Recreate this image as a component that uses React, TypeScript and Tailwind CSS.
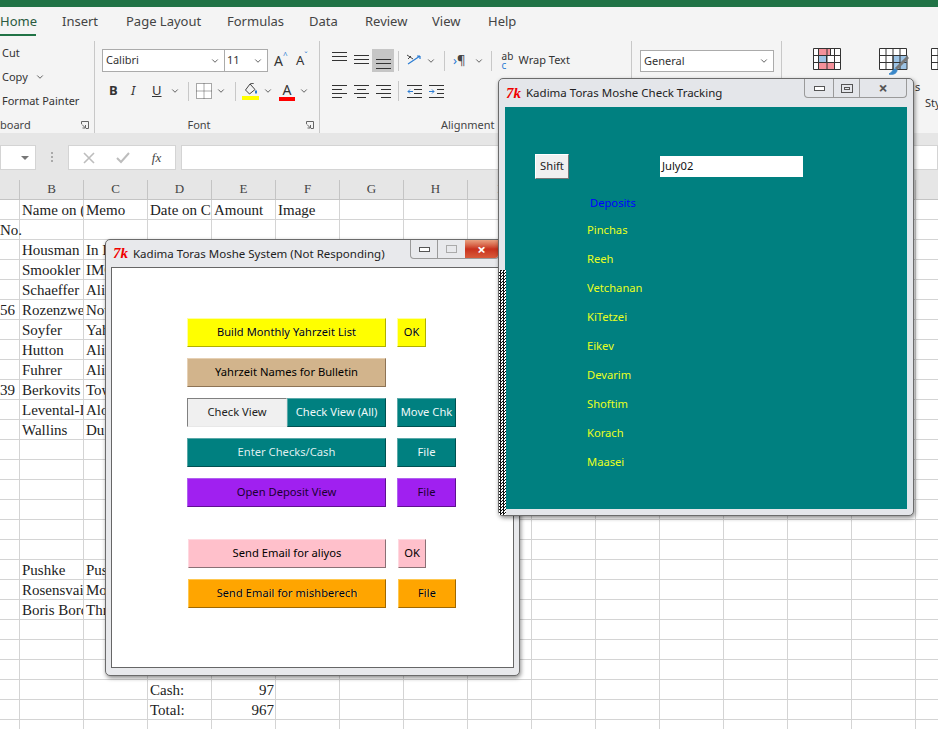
import type { ReactNode } from "react";
import { ChevronDown } from "lucide-react";

const TABS = [
  { label: "Home", width: "w-[62px]" },
  { label: "Insert", width: "w-[64px]" },
  { label: "Page Layout", width: "w-[101px]" },
  { label: "Formulas", width: "w-[82px]" },
  { label: "Data", width: "w-[56px]" },
  { label: "Review", width: "w-[67px]" },
  { label: "View", width: "w-[56px]" },
  { label: "Help", width: "w-[50px]" },
];

const COLUMNS = ["B", "C", "D", "E", "F", "G", "H", "I", "J", "K", "L", "M", "N", "O", "P"];

// row index -> cell text by column, A is index 0
const CELLS: Record<number, (string | null)[]> = {
  0: [null, "Name on (", "Memo", "Date on Cl", "Amount", "Image"],
  1: ["No."],
  2: [null, "Housman", "In I"],
  3: [null, "Smookler", "IMC"],
  4: [null, "Schaeffer", "Aliy"],
  5: ["56", "Rozenzwe", "Nov"],
  6: [null, "Soyfer", "Yah"],
  7: [null, "Hutton", "Aliy"],
  8: [null, "Fuhrer", "Aliy"],
  9: ["39", "Berkovits", "Tow"],
  10: [null, "Levental-I", "Alo"],
  11: [null, "Wallins", "Du"],
  18: [null, "Pushke", "Pus"],
  19: [null, "Rosensvai", "Mo"],
  20: [null, "Boris Bord", "Thr"],
  24: [null, null, null, "Cash:", "97"],
  25: [null, null, null, "Total:", "967"],
};

const PARSHIOS = ["Pinchas", "Reeh", "Vetchanan", "KiTetzei", "Eikev", "Devarim", "Shoftim", "Korach", "Maasei"];

function Chevron({ className = "" }: { className?: string }) {
  return <ChevronDown size={10} strokeWidth={2} className={`shrink-0 text-[#444] ${className}`} />;
}

function Lines({ rows, highlight }: { rows: number[]; highlight?: boolean }) {
  return (
    <div className={`flex h-[23px] w-[22px] shrink-0 items-center justify-center ${highlight ? "bg-[#c6c6c6]" : ""}`}>
      <svg width="15" height="19" viewBox="0 0 15 19" stroke="#333" strokeWidth="1">
        {rows.map((y) => (
          <line key={y} x1={0} x2={15} y1={y + 0.5} y2={y + 0.5} />
        ))}
      </svg>
    </div>
  );
}

function AlignH({ side }: { side: "l" | "c" | "r" }) {
  const long = [0, 15];
  const short = side === "l" ? [0, 10] : side === "c" ? [3, 12] : [5, 15];
  return (
    <div className="flex h-[18px] w-[22px] shrink-0 items-center justify-center">
      <svg width="15" height="14" viewBox="0 0 15 14" stroke="#333">
        {[0, 1, 2, 3].map((i) => {
          const seg = i % 2 === 0 ? long : short;
          return <line key={i} x1={seg[0]} x2={seg[1]} y1={1.5 + i * 4} y2={1.5 + i * 4} />;
        })}
      </svg>
    </div>
  );
}

function Sep({ className = "" }: { className?: string }) {
  return <div className={`w-px shrink-0 bg-[#c8c8c8] ${className}`} />;
}

function Launcher() {
  return (
    <svg width="8" height="8" viewBox="0 0 8 8" fill="none" stroke="#666" className="absolute right-[5px] bottom-[4px]">
      <path d="M0.5 3V0.5H7.5V7.5H5M1 3.5L4.5 7M4.5 4V7H1.5" />
    </svg>
  );
}

function GroupLabel({ children }: { children: ReactNode }) {
  return <div className="absolute inset-x-0 bottom-0 h-4 pr-[16px] text-center text-[11px] leading-4 text-[#444]">{children}</div>;
}

function Ribbon() {
  return (
    <div className="flex h-[98px] bg-[#f4f4f4] font-['Noto_Sans',sans-serif] text-[11px] text-[#333]">
      {/* clipboard */}
      <div className="relative mt-[6px] h-[92px] w-[95px] shrink-0 border-r border-[#c8c8c8] pl-[2px] leading-[24px]">
        <div>Cut</div>
        <div className="flex items-center gap-[7px]">
          Copy <Chevron />
        </div>
        <div>Format Painter</div>
        <div className="absolute bottom-0 left-0 h-4 leading-4 text-[#444]">board</div>
        <Launcher />
      </div>

      {/* font */}
      <div className="relative mt-[6px] h-[92px] w-[225px] shrink-0 border-r border-[#c8c8c8] pl-[7px] pt-[8px]">
        <div className="flex items-center">
          <div className="flex h-[23px] w-[123px] shrink-0 items-center justify-between border border-[#ababab] bg-white pl-[3px] pr-[4px]">
            Calibri <Chevron />
          </div>
          <div className="ml-[-1px] flex h-[23px] w-[44px] shrink-0 items-center justify-between border border-[#ababab] bg-white pl-[2px] pr-[4px]">
            11 <Chevron />
          </div>
          <div className="ml-[6px] flex w-[20px] text-[14px]">
            A<span className="text-[8px] leading-[10px] text-[#2b7cd3]">^</span>
          </div>
          <div className="ml-[2px] flex w-[20px] text-[13px]">
            A<span className="text-[8px] leading-[10px] text-[#2b7cd3]">ˇ</span>
          </div>
        </div>
        <div className="mt-[8px] flex h-[22px] items-center text-[13px]">
          <span className="ml-[7px] w-[22px] font-bold">B</span>
          <span className="w-[21px] italic">I</span>
          <span className="w-[11px] underline">U</span>
          <Chevron className="ml-[7px]" />
          <Sep className="ml-[8px] h-[19px]" />
          <svg width="16" height="16" viewBox="0 0 16 16" className="ml-[7px]" fill="#fff" stroke="#555" strokeDasharray="1 1">
            <path d="M.5.5h15v15H.5zM8 .5v15M.5 8h15" />
          </svg>
          <Chevron className="ml-[4px]" />
          <Sep className="ml-[9px] h-[19px]" />
          <div className="ml-[6px] flex w-[17px] flex-col items-center">
            <svg width="14" height="13" viewBox="0 0 14 13" fill="none" stroke="#444">
              <path d="M6 1L1.5 7l4 4L11 6.5zM6 1l4-1" />
              <path d="M12 7.5v3" stroke="#2b7cd3" strokeWidth="2" />
            </svg>
            <div className="h-1 w-full bg-[#ffff00]" />
          </div>
          <Chevron className="ml-[4px]" />
          <div className="ml-[6px] flex w-[16px] flex-col items-center text-[14px] leading-[15px]">
            A
            <div className="h-1 w-full bg-[#ff0000]" />
          </div>
          <Chevron className="ml-[4px]" />
        </div>
        <GroupLabel>Font</GroupLabel>
        <Launcher />
      </div>

      {/* alignment */}
      <div className="relative mt-[6px] h-[92px] w-[312px] shrink-0 border-r border-[#c8c8c8] pl-[8px] pt-[8px]">
        <div className="flex h-[23px] items-center">
          <Lines rows={[1, 5, 9]} />
          <Lines rows={[4, 8, 12]} />
          <Lines rows={[8, 12, 17]} highlight />
          <Sep className="ml-[4px] h-[20px]" />
          <svg width="18" height="18" viewBox="0 0 18 18" fill="none" className="ml-[6px] shrink-0">
            <path d="M3 12L15 4M15 4h-3M15 4v3" stroke="#2b7cd3" strokeWidth="1.2" />
            <path d="M2 3l6 4M3 7l3-3" stroke="#444" />
          </svg>
          <Chevron className="ml-[3px]" />
          <Sep className="ml-[8px] h-[20px]" />
          <span className="ml-[8px] text-[13px] text-[#2b7cd3]">›</span>
          <span className="text-[13px] text-[#444]">¶</span>
          <Chevron className="ml-[8px]" />
          <Sep className="ml-[7px] h-[20px]" />
          <div className="ml-[10px] flex items-center gap-[3px]">
            <span className="w-[14px] break-all text-[10px] leading-[9px]">
              ab<span className="text-[#2b7cd3]">c</span>
            </span>
            <span className="whitespace-nowrap">Wrap Text</span>
          </div>
        </div>
        <div className="mt-[8px] flex h-[22px] items-center">
          <AlignH side="l" />
          <AlignH side="c" />
          <AlignH side="r" />
          <Sep className="ml-[4px] h-[20px]" />
          <svg width="15" height="14" viewBox="0 0 15 14" fill="none" stroke="#333" className="ml-[8px]">
            <path d="M0 1.5h15M7 5.5h8M7 9.5h8M0 13.5h15" />
            <path d="M6 7.5H1M3 5.5l-2 2 2 2" stroke="#2b7cd3" />
          </svg>
          <svg width="15" height="14" viewBox="0 0 15 14" fill="none" stroke="#333" className="ml-[7px]">
            <path d="M0 1.5h15M8 5.5h7M8 9.5h7M0 13.5h15" />
            <path d="M0 7.5h5M3 5.5l2 2-2 2" stroke="#2b7cd3" />
          </svg>
        </div>
        <div className="absolute inset-x-0 bottom-0 h-4 pl-[121px] leading-4 text-[#444]">Alignment</div>
      </div>

      {/* number */}
      <div className="mt-[6px] h-[92px] w-[150px] shrink-0 border-r border-[#c8c8c8] pl-[8px] pt-[9px]">
        <div className="flex h-[22px] w-[134px] items-center justify-between border border-[#ababab] bg-white pl-[3px] pr-[4px]">
          General <Chevron />
        </div>
      </div>

      {/* styles, cut off by the window edge */}
      <div className="relative flex pl-[31px] pt-[13px]">
        <svg width="28" height="22" viewBox="0 0 28 22" fill="#fff" stroke="#333" className="shrink-0">
          <path d="M.5.5h27v21H.5z" />
          <path d="M5.5.5h12v7h-12z" fill="#f4919a" />
          <path d="M5.5 7.5h8v7h-8z" fill="#9cc3e5" />
          <path d="M5.5 14.5h16v7h-16z" fill="#f4919a" />
          <path d="M5.5.5v21M14 .5v21M21.5.5v21M.5 7.5h27M.5 14.5h27" fill="none" />
        </svg>
        <svg width="30" height="28" viewBox="0 0 30 28" fill="#fff" stroke="#333" className="ml-[38px] shrink-0">
          <path d="M.5.5h27v21H.5z" />
          <path d="M14 7.5h14v14H14z" fill="#9cc3e5" />
          <path d="M14 .5v21M21 .5v21M7 .5v21M.5 7.5h27M.5 14.5h27" fill="none" />
          <path d="M29 9L17 21" stroke="#777" strokeWidth="3" />
          <path d="M16 21c-3 1-3 4-6 5 3 1 8 0 8-4z" fill="#3a87c8" stroke="#3a87c8" />
        </svg>
        <svg width="14" height="22" viewBox="0 0 14 22" fill="#fff" stroke="#333" className="ml-[22px] shrink-0">
          <path d="M.5.5h20v21H.5zM.5 7.5h20M.5 14.5h20M7 .5v21" />
        </svg>
        <span className="absolute left-[133px] top-[44px]">s</span>
        <span className="absolute left-[143px] top-[60px]">Sty</span>
      </div>
    </div>
  );
}

function FormulaBar() {
  return (
    <div className="flex h-[47px] items-start bg-[#e6e6e6] pt-[12px]">
      <div className="flex h-[25px] w-[36px] items-center justify-end border border-[#d4d4d4] bg-white pr-[6px]">
        <div className="h-0 w-0 border-x-[4px] border-t-[4px] border-x-transparent border-t-[#777]" />
      </div>
      <div className="flex w-[32px] flex-col items-center gap-[2px]">
        <div className="mt-[7px] size-[2px] bg-[#aaa]" />
        <div className="size-[2px] bg-[#aaa]" />
        <div className="size-[2px] bg-[#aaa]" />
      </div>
      <div className="flex h-[25px] w-[108px] items-center justify-around border border-[#d4d4d4] bg-white px-[3px] text-[#bbb]">
        <svg width="12" height="12" viewBox="0 0 12 12" stroke="#bdbdbd" strokeWidth="1.6">
          <path d="M1 1l10 10M11 1L1 11" />
        </svg>
        <svg width="14" height="12" viewBox="0 0 14 12" fill="none" stroke="#bdbdbd" strokeWidth="2">
          <path d="M1 6l4 4 8-9" />
        </svg>
        <span className="font-['Liberation_Serif',serif] text-[13px] italic text-[#444]">fx</span>
      </div>
      <div className="ml-[5px] h-[25px] flex-1 border border-[#d4d4d4] bg-white" />
    </div>
  );
}

function Sheet() {
  const rowNumbers = Array.from({ length: 27 }, (_, i) => i);
  return (
    <div className="font-['Liberation_Serif',serif] text-[15px] text-[#222]">
      <div className="flex h-[20px] border-b border-[#c4c4c4] bg-[#e6e6e6]">
        <div className="w-[20px] shrink-0 border-r border-[#c4c4c4]" />
        {COLUMNS.map((c) => (
          <div key={c} className="w-[64px] shrink-0 border-r border-[#c4c4c4] text-center text-[13px] leading-[18px] text-[#444]">
            {c}
          </div>
        ))}
      </div>
      {rowNumbers.map((r) => (
        <div key={r} className="flex h-[20px] bg-white">
          {[0, ...COLUMNS.map((_, i) => i + 1)].map((c) => {
            const text = CELLS[r]?.[c] ?? null;
            const numeric = text === "97" || text === "967";
            return (
              <div
                key={c}
                className={`shrink-0 whitespace-nowrap border-r border-b border-[#d4d4d4] pr-[1px] leading-[21px] ${
                  c === 0 ? "w-[20px]" : "w-[64px] overflow-hidden pl-[2px]"
                } ${numeric ? "text-right" : ""}`}
              >
                {text}
              </div>
            );
          })}
        </div>
      ))}
    </div>
  );
}

function TkIcon() {
  return <span className="w-[18px] font-['Liberation_Serif',serif] text-[15px] font-bold italic leading-none text-[#f00000]">7k</span>;
}

function RaisedButton({ label, className }: { label: string; className: string }) {
  return (
    <button
      type="button"
      className={`flex h-[29px] shrink-0 items-center justify-center border-[1.5px] font-['Noto_Sans',sans-serif] text-[11.2px] ${className}`}
    >
      {label}
    </button>
  );
}

const GLOW = "[text-shadow:1px_0_0_rgba(255,255,255,0.45)]";

function SystemWindow() {
  return (
    <div className="absolute left-[105px] top-[239px] flex h-[437px] w-[415px] flex-col rounded-[5px] border border-[#6b6b6b] bg-[#e8e9ec] px-[5px] pb-[7px] shadow-[1px_2px_4px_rgba(0,0,0,0.45)]">
      <div className="flex h-[27px] shrink-0 items-center pl-[2px]">
        <TkIcon />
        <span className="ml-[2px] font-['Noto_Sans',sans-serif] text-[11.5px] text-[#222]">Kadima Toras Moshe System (Not Responding)</span>
      </div>
      <div className="absolute right-[20px] top-0 flex h-[19px] w-[89px] overflow-hidden rounded-b-[4px] border-x border-b border-[#9a9a9a]">
        <div className="flex w-[27px] items-center justify-center border-r border-[#9a9a9a]">
          <div className="h-[5px] w-[11px] border border-[#555] bg-white" />
        </div>
        <div className="flex w-[27px] items-center justify-center">
          <div className="h-[8px] w-[11px] border border-[#aaa]" />
        </div>
        <div className="flex flex-1 items-center justify-center bg-gradient-to-b from-[#e8a080] via-[#c8301c] to-[#d85a3a] text-[15px] font-bold leading-none text-white">
          ×
        </div>
      </div>
      <div className="flex flex-1 flex-col gap-[11px] border border-[#666] bg-white pl-[75px] pt-[50px] text-black">
        <div className="flex gap-[11px]">
          <RaisedButton label="Build Monthly Yahrzeit List" className={`w-[199px] border-[#ffffa0] border-b-[#b0b000] border-r-[#b0b000] bg-[#ffff00] ${GLOW}`} />
          <RaisedButton label="OK" className={`w-[29px] border-[#ffffa0] border-b-[#b0b000] border-r-[#b0b000] bg-[#ffff00] ${GLOW}`} />
        </div>
        <div className="flex gap-[11px]">
          <RaisedButton label="Yahrzeit Names for Bulletin" className="w-[199px] border-[#e6d0b4] border-b-[#8d7355] border-r-[#8d7355] bg-[#d2b48c]" />
        </div>
        <div className="flex gap-[11px]">
          <div className="flex">
            <RaisedButton label="Check View" className="w-[100px] border-[#808080] border-b-[#e8e8e8] border-r-[#e8e8e8] bg-[#f0f0f0] text-[#222]" />
            <RaisedButton label="Check View (All)" className="w-[99px] border-[#5aa8a8] border-b-[#005050] border-r-[#005050] bg-[#008080] text-[#eef8f8]" />
          </div>
          <RaisedButton label="Move Chk" className="w-[59px] border-[#5aa8a8] border-b-[#005050] border-r-[#005050] bg-[#008080] text-[#eef8f8]" />
        </div>
        <div className="flex gap-[11px]">
          <RaisedButton label="Enter Checks/Cash" className="w-[199px] border-[#5aa8a8] border-b-[#005050] border-r-[#005050] bg-[#008080] text-[#dfeeee]" />
          <RaisedButton label="File" className="w-[59px] border-[#5aa8a8] border-b-[#005050] border-r-[#005050] bg-[#008080] text-[#eef8f8]" />
        </div>
        <div className="flex gap-[11px]">
          <RaisedButton label="Open Deposit View" className="w-[199px] border-[#b060f0] border-b-[#601090] border-r-[#601090] bg-[#a020f0] text-[#1a0030]" />
          <RaisedButton label="File" className="w-[59px] border-[#b060f0] border-b-[#601090] border-r-[#601090] bg-[#a020f0] text-[#1a0030]" />
        </div>
        <div className="h-[10px]" />
        <div className="ml-[1px] flex gap-[12px]">
          <RaisedButton label="Send Email for aliyos" className="w-[198px] border-[#ffd8e0] border-b-[#8a7075] border-r-[#8a7075] bg-[#ffc0cb]" />
          <RaisedButton label="OK" className="w-[28px] border-[#ffd8e0] border-b-[#8a7075] border-r-[#8a7075] bg-[#ffc0cb]" />
        </div>
        <div className="ml-[1px] flex gap-[12px]">
          <RaisedButton label="Send Email for mishberech" className={`w-[198px] border-[#ffc850] border-b-[#a06800] border-r-[#a06800] bg-[#ffa500] ${GLOW}`} />
          <RaisedButton label="File" className={`w-[58px] border-[#ffc850] border-b-[#a06800] border-r-[#a06800] bg-[#ffa500] ${GLOW}`} />
        </div>
      </div>
    </div>
  );
}

function TrackingWindow() {
  return (
    <div className="absolute left-[498px] top-[78px] flex h-[438px] w-[416px] flex-col rounded-[5px] border border-[#6b6b6b] bg-[#e4e6ea] px-[6px] pb-[6px] shadow-[1px_2px_4px_rgba(0,0,0,0.45)]">
      <div className="flex h-[28px] shrink-0 items-center pl-[1px]">
        <TkIcon />
        <span className="ml-[2px] font-['Noto_Sans',sans-serif] text-[11.5px] text-[#222]">Kadima Toras Moshe Check Tracking</span>
      </div>
      <div className="absolute right-[6px] top-0 flex h-[19px] w-[103px] rounded-b-[4px] border-x border-b border-[#9a9a9a]">
        <div className="flex w-[29px] items-center justify-center border-r border-[#9a9a9a]">
          <div className="h-[5px] w-[11px] border border-[#555] bg-white" />
        </div>
        <div className="flex w-[26px] items-center justify-center border-r border-[#9a9a9a]">
          <div className="flex h-[9px] w-[12px] items-center justify-center border border-[#555]">
            <div className="h-[3px] w-[6px] border border-[#555]" />
          </div>
        </div>
        <div className="flex flex-1 items-center justify-center text-[16px] font-bold leading-none text-[#555]">×</div>
      </div>
      <div className="flex flex-1 flex-col bg-[#008080] pl-[30px] pt-[47px] font-['Noto_Sans',sans-serif] text-[11.2px]">
        <div className="flex items-center">
          <div className="flex h-[25px] w-[34px] items-center justify-center border-[1.5px] border-[#fff] border-b-[#777] border-r-[#777] bg-[#f0f0f0] text-[#222]">Shift</div>
          <div className="ml-[91px] flex h-[21px] w-[143px] items-center bg-white pl-[2px] text-[#111]">July02</div>
        </div>
        <div className="ml-[55px] mt-[16px] text-[#0000ff]">Deposits</div>
        <div className="ml-[52px] mt-[3px] flex flex-col text-[#e8ff20]">
          {PARSHIOS.map((p) => (
            <div key={p} className="h-[29px] leading-[29px]">
              {p}
            </div>
          ))}
        </div>
      </div>
      {/* repaint noise left behind by the hung window */}
      <div className="absolute bottom-0 left-0 top-[191px] w-[7px] bg-[repeating-conic-gradient(#111_0_25%,#fff_0_50%)] bg-[length:3px_3px]" />
    </div>
  );
}

export default function App() {
  return (
    <div className="relative h-[729px] w-[938px] overflow-hidden bg-white">
      <div className="h-[7px] bg-[#217346]" />
      <div className="flex h-[28px] items-center bg-[#f4f4f4] font-['Noto_Sans',sans-serif] text-[13px] text-[#444]">
        {TABS.map((t) => (
          <div key={t.label} className={`relative shrink-0 leading-[30px] ${t.width} ${t.label === "Home" ? "text-[#2a5a40]" : ""}`}>
            {t.label}
            {t.label === "Home" && <div className="absolute bottom-0 left-0 h-[2px] w-[36px] bg-[#217346]" />}
          </div>
        ))}
      </div>
      <Ribbon />
      <FormulaBar />
      <Sheet />
      <SystemWindow />
      <TrackingWindow />
    </div>
  );
}
